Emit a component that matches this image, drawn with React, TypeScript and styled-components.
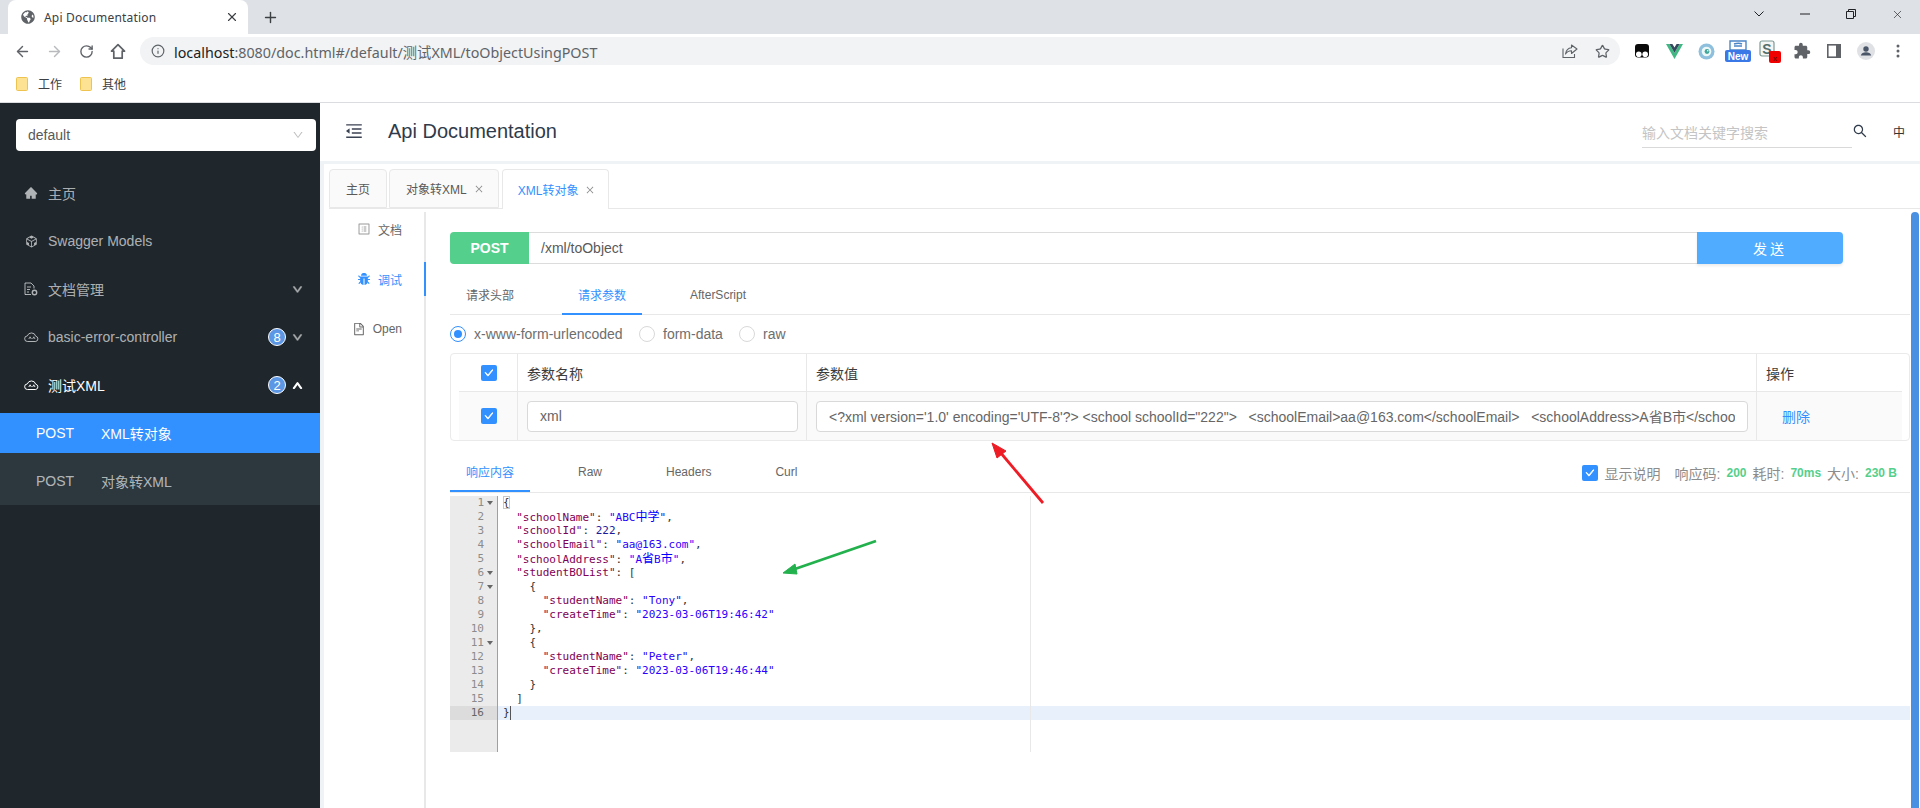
// App.tsx
import React from 'react';
import styled, { createGlobalStyle } from 'styled-components';
import { FaGlobeAmericas } from 'react-icons/fa';
import { MdExtension } from 'react-icons/md';
import {
  AiFillBug,
  AiFillHome,
  AiOutlineCheck,
  AiOutlineClose,
  AiOutlineCodeSandbox,
  AiOutlineDown,
  AiOutlineFileText,
  AiOutlineMenuFold,
  AiOutlineProfile,
  AiOutlineSearch,
  AiOutlineUp,
} from 'react-icons/ai';
import { ArrowLeft, ArrowRight, Info, Plus, RotateCw, Star, X } from 'lucide-react';

const UI_FONT = `"Liberation Sans", "Noto Sans CJK SC", sans-serif`;
const CHROME_FONT = `"Noto Sans", "Noto Sans CJK SC", sans-serif`;
const MONO_FONT = `"DejaVu Sans Mono", "Noto Sans CJK SC", monospace`;

const GlobalStyle = createGlobalStyle`
  html, body {
    margin: 0;
    height: 100%;
    overflow: hidden;
    background: #ffffff;
  }
  * {
    box-sizing: border-box;
  }
`;

const Page = styled.div`
  position: relative;
  width: 1920px;
  height: 808px;
  overflow: hidden;
  display: flex;
  flex-direction: column;
  font-family: ${UI_FONT};
`;

/* browser chrome */
const TabStrip = styled.div`
  height: 34px;
  background: #dee1e6;
  display: flex;
  align-items: flex-end;
  padding-left: 8px;
`;

const BrowserTab = styled.div`
  width: 240px;
  height: 34px;
  background: #ffffff;
  border-radius: 8px 8px 0 0;
  display: flex;
  align-items: center;
  padding: 0 9px 0 13px;
  font-family: ${CHROME_FONT};
  font-size: 12px;
  color: #3c4043;
  svg {
    flex: none;
  }
`;

const BrowserTabTitle = styled.span`
  margin-left: 9px;
  flex: 1;
  letter-spacing: 0.2px;
`;

const NewTab = styled.div`
  width: 44px;
  height: 34px;
  display: flex;
  align-items: center;
  justify-content: center;
  color: #3c4043;
`;

const WindowControls = styled.div`
  margin-left: auto;
  height: 28px;
  align-self: flex-start;
  display: flex;
  padding-right: 0;
`;

const WindowButton = styled.div`
  width: 46px;
  height: 28px;
  display: flex;
  align-items: center;
  justify-content: center;
  color: #202124;
`;

const Toolbar = styled.div`
  height: 34px;
  display: flex;
  align-items: center;
  padding: 0 6px;
  background: #ffffff;
`;

const ToolButton = styled.div<{ $dim?: boolean }>`
  width: 32px;
  height: 32px;
  flex: none;
  display: flex;
  align-items: center;
  justify-content: center;
  color: ${p => (p.$dim ? '#b8babd' : '#5f6368')};
`;

const UrlPill = styled.div`
  flex: 1;
  height: 28px;
  margin: 0 6px;
  background: #f1f3f4;
  border-radius: 14px;
  display: flex;
  align-items: center;
  padding: 0 2px 0 11px;
  color: #5f6368;
`;

const UrlText = styled.span`
  margin-left: 9px;
  flex: 1;
  font-family: ${CHROME_FONT};
  font-size: 14.3px;
  color: #5f6368;
  b {
    font-weight: 400;
    color: #202124;
  }
`;

const BookmarkBar = styled.div`
  height: 35px;
  display: flex;
  align-items: center;
  padding: 0 0 3px 16px;
  gap: 18px;
  background: #ffffff;
  border-bottom: 1px solid #dadce0;
`;

const Bookmark = styled.div`
  display: flex;
  align-items: center;
  gap: 10px;
  font-family: ${CHROME_FONT};
  font-size: 12px;
  color: #3c4043;
`;

/* app */
const AppRow = styled.div`
  flex: 1;
  display: flex;
  min-height: 0;
`;

const Sidebar = styled.aside`
  width: 320px;
  flex: none;
  background: #1f272d;
  padding-top: 16px;
`;

const ProjectSelect = styled.div`
  height: 32px;
  margin: 0 4px 0 16px;
  background: #ffffff;
  border-radius: 4px;
  display: flex;
  align-items: center;
  justify-content: space-between;
  padding: 0 12px;
  font-size: 14px;
  color: #595959;
  svg {
    color: #bfbfbf;
  }
`;

const Menu = styled.nav`
  margin-top: 18px;
`;

const MenuRow = styled.div<{ $active?: boolean }>`
  height: 48px;
  display: flex;
  align-items: center;
  padding: 0 16px 0 24px;
  font-size: 14px;
  color: ${p => (p.$active ? '#ffffff' : 'rgba(255, 255, 255, 0.65)')};
`;

const MenuIcon = styled.span`
  width: 24px;
  display: flex;
  align-items: center;
  flex: none;
`;

const MenuLabel = styled.span`
  flex: 1;
`;

const CountBadge = styled.span`
  width: 18px;
  height: 18px;
  border-radius: 50%;
  background: #5b97e5;
  border: 1px solid #ffffff;
  color: #ffffff;
  font-size: 13px;
  display: flex;
  align-items: center;
  justify-content: center;
  margin-right: 4px;
`;

const Caret = styled.span`
  width: 14px;
  display: flex;
  align-items: center;
  justify-content: center;
`;

const SubMenu = styled.div`
  margin-top: 4px;
`;

const SubRow = styled.div<{ $selected?: boolean }>`
  height: ${p => (p.$selected ? '40px' : '52px')};
  padding-top: ${p => (p.$selected ? '0' : '4px')};
  display: flex;
  align-items: center;
  padding-left: 36px;
  font-size: 14px;
  background: ${p => (p.$selected ? '#3390ff' : '#2c383e')};
  color: ${p => (p.$selected ? '#ffffff' : 'rgba(255, 255, 255, 0.65)')};
`;

const SubMethod = styled.span`
  width: 65px;
`;

const MainColumn = styled.main`
  flex: 1;
  min-width: 0;
  display: flex;
  flex-direction: column;
  background: #f0f3f6;
`;

const Header = styled.header`
  height: 58px;
  flex: none;
  background: #ffffff;
  display: flex;
  align-items: center;
  padding: 0 0 0 24px;
  color: #3b4252;
`;

const HeaderTitle = styled.h1`
  margin: 0 0 2px 24px;
  font-size: 20px;
  font-weight: 400;
  color: #2f3b4b;
`;

const SearchBox = styled.div`
  margin-left: auto;
  width: 210px;
  height: 32px;
  border-bottom: 1px solid #d9d9d9;
  font-size: 14px;
  color: #c4c4c4;
  display: flex;
  align-items: center;
`;

const SearchIcon = styled.span`
  width: 16px;
  margin-bottom: 2px;
  display: flex;
  justify-content: center;
  color: #2f3b4b;
`;

const LangSwitch = styled.span`
  width: 52px;
  padding-left: 10px;
  margin-bottom: 2px;
  font-size: 12px;
  color: #333333;
  text-align: center;
`;

const Workspace = styled.div`
  position: relative;
  flex: 1;
  min-height: 0;
  margin: 3px 0 0 4px;
  background: #ffffff;
  display: flex;
  flex-direction: column;
`;

const PageTabs = styled.div`
  height: 45px;
  flex: none;
  margin-left: 5px;
  padding-top: 5px;
  display: flex;
  border-bottom: 1px solid #e8e8e8;
`;

const PageTab = styled.div<{ $active?: boolean }>`
  height: ${p => (p.$active ? '40px' : '39px')};
  margin: 0 2px 0 ${p => (p.$active ? '1px' : '0')};
  padding: 0 ${p => (p.$active ? '13px 0 15px' : '14px 0 16px')};
  display: flex;
  align-items: center;
  gap: 7px;
  font-size: 12px;
  border: 1px solid #e8e8e8;
  border-bottom: ${p => (p.$active ? 'none' : '1px solid #e8e8e8')};
  border-radius: 4px 4px 0 0;
  background: ${p => (p.$active ? '#ffffff' : '#fafafa')};
  color: ${p => (p.$active ? '#3390ff' : '#595959')};
  svg {
    color: #8c8c8c;
  }
`;

const HomeTab = styled(PageTab)`
  padding: 0 16px;
`;

const WorkBody = styled.div`
  flex: 1;
  min-height: 0;
  display: flex;
`;

const DocNav = styled.div`
  width: 97px;
  margin: 3px 0 0 5px;
  flex: none;
  border-right: 2px solid #e8e8e8;
  display: flex;
  flex-direction: column;
  gap: 16px;
`;

const DocNavItem = styled.div<{ $active?: boolean }>`
  position: relative;
  height: 34px;
  display: flex;
  align-items: center;
  justify-content: flex-end;
  padding-right: 22px;
  gap: 7px;
  font-size: 12px;
  color: ${p => (p.$active ? '#3390ff' : '#666666')};
  ${p =>
    p.$active &&
    `&::after {
      content: '';
      position: absolute;
      top: 0;
      right: -2px;
      width: 2px;
      height: 34px;
      background: #3390ff;
    }`}
`;

const Content = styled.section`
  flex: 1;
  min-width: 0;
  padding: 23px 10px 0 24px;
`;

const RequestBar = styled.div`
  height: 32px;
  width: 1393px;
  display: flex;
  font-size: 14px;
`;

const MethodTag = styled.div`
  width: 79px;
  background: #55cf8c;
  border-radius: 4px 0 0 4px;
  color: #ffffff;
  font-weight: 700;
  font-size: 14px;
  display: flex;
  align-items: center;
  justify-content: center;
`;

const PathField = styled.div`
  flex: 1;
  border: 1px solid #dcdcdc;
  border-width: 1px 0;
  display: flex;
  align-items: center;
  padding-left: 12px;
  color: #595959;
`;

const SendButton = styled.div`
  width: 146px;
  background: #50acff;
  border-radius: 0 4px 4px 0;
  box-shadow: 0 2px 3px rgba(0, 0, 0, 0.08);
  color: #ffffff;
  font-size: 14px;
  letter-spacing: 3px;
  display: flex;
  align-items: center;
  justify-content: center;
`;

const TabsBar = styled.div<{ $top: number }>`
  margin-top: ${p => p.$top}px;
  height: 39px;
  display: flex;
  align-items: stretch;
  gap: 32px;
  border-bottom: 1px solid #e8e8e8;
  font-size: 12px;
`;

const InnerTab = styled.div<{ $active?: boolean }>`
  padding: 0 16px;
  height: 39px;
  display: flex;
  align-items: center;
  color: ${p => (p.$active ? '#3390ff' : '#666666')};
  border-bottom: 2px solid ${p => (p.$active ? '#3390ff' : 'transparent')};
`;

const RadioRow = styled.div`
  height: 38px;
  display: flex;
  align-items: center;
  font-size: 14px;
  color: #6e6e6e;
`;

const RadioOption = styled.label<{ $width: number }>`
  width: ${p => p.$width}px;
  display: flex;
  align-items: center;
  gap: 8px;
`;

const RadioDot = styled.span<{ $on?: boolean }>`
  width: 16px;
  height: 16px;
  border-radius: 50%;
  border: 1px solid ${p => (p.$on ? '#3390ff' : '#d9d9d9')};
  display: flex;
  align-items: center;
  justify-content: center;
  &::after {
    content: '';
    width: 8px;
    height: 8px;
    border-radius: 50%;
    background: ${p => (p.$on ? '#3390ff' : 'transparent')};
  }
`;

const ParamTable = styled.div`
  height: 88px;
  border: 1px solid #eaeaea;
  border-radius: 4px;
  font-size: 14px;
  color: #3c3c3c;
`;

const ParamHead = styled.div`
  height: 37px;
  display: grid;
  grid-template-columns: 67px 289px 950px 1fr;
`;

const ParamBody = styled.div`
  height: 49px;
  margin: 0 7px 0 8px;
  background: #fafafa;
  border-top: 1px solid #e8e8e8;
  display: grid;
  grid-template-columns: 59px 289px 950px 1fr;
`;

const ParamCell = styled.div<{ $line?: boolean }>`
  display: flex;
  align-items: center;
  padding: 0 8px 0 9px;
  border-right: ${p => (p.$line ? '1px solid #e8e8e8' : 'none')};
`;

const HeadCheckCell = styled(ParamCell)`
  padding: 0 0 0 30px;
`;

const BodyCheckCell = styled(ParamCell)`
  padding: 0 0 0 22px;
`;

const CheckBox = styled.span`
  width: 16px;
  height: 16px;
  flex: none;
  border-radius: 2px;
  background: #3390ff;
  color: #ffffff;
  display: flex;
  align-items: center;
  justify-content: center;
`;

const ParamInput = styled.input`
  width: 100%;
  height: 31px;
  border: 1px solid #d9d9d9;
  border-radius: 4px;
  background: #ffffff;
  padding: 0 12px;
  font-family: ${UI_FONT};
  font-size: 14px;
  color: #666666;
  outline: none;
`;

const DeleteLink = styled.span`
  margin-left: 16px;
  font-size: 14px;
  color: #3390ff;
`;

const ResponseBar = styled(TabsBar)`
  height: 40px;
`;

const ResponseInfo = styled.div`
  margin-left: auto;
  display: flex;
  align-items: center;
  font-size: 14px;
  color: #8c8c8c;
  padding-right: 13px;
`;

const InfoLabel = styled.span<{ $gap: number }>`
  margin-left: ${p => p.$gap}px;
`;

const InfoValue = styled.b`
  margin-left: 6px;
  font-size: 12px;
  color: #55cf8c;
  font-weight: 700;
`;

const Editor = styled.div`
  position: relative;
  margin-top: 3px;
  height: 256px;
  display: flex;
  font-family: ${MONO_FONT};
  font-size: 11px;
  line-height: 14px;
`;

const Gutter = styled.div`
  width: 48px;
  flex: none;
  background: #ebebeb;
  border-right: 1px solid #a0a0a0;
  color: #8c8c8c;
`;

const GutterCell = styled.div<{ $active?: boolean }>`
  height: 14px;
  display: flex;
  justify-content: flex-end;
  align-items: center;
  padding-right: 13px;
  position: relative;
  background: ${p => (p.$active ? '#dcdcdc' : 'transparent')};
  color: ${p => (p.$active ? '#666666' : '#8c8c8c')};
`;

const FoldMark = styled.span`
  position: absolute;
  right: 4px;
  top: 5px;
  border: 3px solid transparent;
  border-top: 4px solid #666666;
  border-bottom: none;
`;

const CodeArea = styled.div`
  flex: 1;
  min-width: 0;
`;

const CodeLine = styled.div<{ $active?: boolean }>`
  height: 14px;
  padding-left: 5px;
  white-space: pre;
  color: #333333;
  background: ${p => (p.$active ? '#e8f0fc' : 'transparent')};
`;

const Key = styled.span`
  color: #7f0055;
`;
const Str = styled.span`
  color: #2a00ff;
`;
const Num = styled.span`
  color: #1a1a9c;
`;
const Cjk = styled.span`
  font-size: 12px;
  color: #0000ff;
`;
const MatchedBrace = styled.span`
  outline: 1px solid #c8c8c8;
  outline-offset: -1px;
`;
const TextCaret = styled.span`
  display: inline-block;
  width: 1px;
  height: 14px;
  vertical-align: top;
  background: #555555;
`;

const PrintMargin = styled.div`
  position: absolute;
  top: 0;
  bottom: 0;
  left: 580px;
  width: 1px;
  background: #e8e8e8;
`;

const ScrollThumb = styled.div`
  position: absolute;
  top: 48px;
  right: 1px;
  bottom: 0;
  width: 8px;
  border-radius: 4px 4px 0 0;
  background: #4a90e2;
`;

const Annotations = styled.svg`
  position: absolute;
  inset: 0;
  pointer-events: none;
`;

/* hand drawn icons */
const BookmarkFolder = () => (
  <svg width="12" height="14" viewBox="0 0 12 14">
    <path d="M0.5 1.5a1 1 0 0 1 1-1h9a1 1 0 0 1 1 1v11a1 1 0 0 1-1 1h-9a1 1 0 0 1-1-1z" fill="#fde293" stroke="#eec34f" />
  </svg>
);

const HomeOutline = () => (
  <svg width="16" height="17" viewBox="0 0 16 17" fill="none" stroke="#5f6368" strokeWidth="1.7">
    <path d="M8 1.6 1.5 8.2h2.3v7h8.4v-7h2.3z" strokeLinejoin="round" />
  </svg>
);

const ShareIcon = () => (
  <svg width="16" height="14" viewBox="0 0 16 14" fill="none" stroke="#5f6368" strokeWidth="1.1">
    <path d="M1 4.5v9h11.5V10" />
    <path d="M9.5 1v2.7C5.5 4 4 6.4 3.5 10c1.4-2.4 3.2-3.3 6-3.3v2.8L15 5z" strokeLinejoin="round" />
  </svg>
);

const TadpoleExt = () => (
  <svg width="16" height="16" viewBox="0 0 16 16">
    <rect x="1" y="1" width="14" height="13.5" rx="3" fill="#0a0a0a" />
    <circle cx="4.8" cy="11.2" r="2.8" fill="#ffffff" />
    <circle cx="11.2" cy="11.2" r="2.8" fill="#ffffff" />
    <rect x="7.2" y="3" width="1.6" height="6" fill="#0a0a0a" />
  </svg>
);

const VueExt = () => (
  <svg width="17" height="15" viewBox="0 0 17 15">
    <path d="M0 0h3.4l5.1 8.8L13.6 0H17L8.5 15z" fill="#41b883" />
    <path d="M3.4 0h3l2.1 3.6L10.6 0h3L8.5 8.8z" fill="#35495e" />
  </svg>
);

const RingExt = () => (
  <svg width="17" height="17" viewBox="0 0 17 17">
    <circle cx="8.5" cy="8.5" r="8" fill="#8ebfdc" />
    <circle cx="8.5" cy="8.5" r="4.8" fill="#eef7f8" />
    <circle cx="9" cy="8.5" r="2.4" fill="#3fa79b" />
    <circle cx="9.8" cy="7.8" r="0.8" fill="#ffffff" />
  </svg>
);

const NewExt = () => (
  <svg width="26" height="22" viewBox="0 0 26 22">
    <path d="M5 1h16v9H5z" fill="#ffffff" stroke="#4b87c7" strokeWidth="1.4" />
    <path d="M9 6h8M9 4c3-1 6-1 8 0" stroke="#4b87c7" strokeWidth="1.6" fill="none" />
    <rect x="0" y="10" width="26" height="12" rx="2" fill="#3b78e7" />
    <text x="13" y="20" fontFamily="Liberation Sans" fontSize="10" fontWeight="700" fill="#ffffff" textAnchor="middle">New</text>
  </svg>
);

const RedBadgeExt = () => (
  <svg width="22" height="23" viewBox="0 0 22 23">
    <rect x="1" y="1" width="14" height="15" rx="2" fill="#f3f6f5" stroke="#7d9a93" strokeWidth="1.2" />
    <text x="8" y="14" fontFamily="Liberation Sans" fontSize="14" fontWeight="700" fill="#546e6a" textAnchor="middle">S</text>
    <rect x="10" y="11" width="12" height="12" rx="2" fill="#f00000" />
    <text x="16" y="21" fontFamily="Liberation Sans" fontSize="8" fill="#4a0000" textAnchor="middle">x</text>
  </svg>
);

const PanelIcon = () => (
  <svg width="14" height="14" viewBox="0 0 14 14">
    <path d="M0 0h14v14H0z" fill="#5f6368" />
    <path d="M1.6 1.6h7.4v10.8H1.6z" fill="#ffffff" />
  </svg>
);

const Avatar = () => (
  <svg width="18" height="18" viewBox="0 0 18 18">
    <circle cx="9" cy="9" r="9" fill="#dfe1e5" />
    <circle cx="9" cy="7" r="2.7" fill="#4a5568" />
    <path d="M3.8 13.4c.5-2.2 2.7-3.2 5.2-3.2s4.7 1 5.2 3.2z" fill="#4a5568" />
  </svg>
);

const Kebab = () => (
  <svg width="4" height="14" viewBox="0 0 4 14" fill="#5f6368">
    <circle cx="2" cy="2" r="1.5" />
    <circle cx="2" cy="7" r="1.5" />
    <circle cx="2" cy="12" r="1.5" />
  </svg>
);

const Minimize = () => (
  <svg width="10" height="10" viewBox="0 0 10 10">
    <path d="M0 5h10" stroke="#202124" />
  </svg>
);

const Restore = () => (
  <svg width="10" height="10" viewBox="0 0 10 10" fill="none" stroke="#202124">
    <path d="M.5 2.5h7v7h-7zM2.5 2.5v-2h7v7h-2" />
  </svg>
);

const DocGear = () => (
  <svg width="14" height="14" viewBox="0 0 14 14" fill="none" stroke="currentColor" strokeWidth="1">
    <path d="M7 12.5H1V1h6l3 3v2.5" />
    <path d="M3 5h4M3 7.5h3M3 10h2" />
    <circle cx="10.5" cy="10.5" r="2.2" strokeWidth="1.4" />
  </svg>
);

const CloudApi = () => (
  <svg width="15" height="12" viewBox="0 0 15 12" fill="none" stroke="currentColor" strokeWidth="1">
    <path d="M3.6 10.5a2.8 2.8 0 0 1-.3-5.6 4.4 4.4 0 0 1 8.4.3 2.7 2.7 0 0 1 0 5.3z" />
    <path d="M4.8 8l1.3-2.2L7.4 8M8.6 8l1.2-2.2L11 8" strokeWidth="0.9" />
  </svg>
);

const CHEVRON_DIM = 'rgba(255, 255, 255, 0.4)';

const menuItems = [
  { icon: <AiFillHome size={14} />, label: '主页' },
  { icon: <AiOutlineCodeSandbox size={15} />, label: 'Swagger Models' },
  { icon: <DocGear />, label: '文档管理', caret: 'down' },
  { icon: <CloudApi />, label: 'basic-error-controller', count: 8, caret: 'down' },
  { icon: <CloudApi />, label: '测试XML', count: 2, caret: 'up', active: true },
];

const extensionIcons = [
  <TadpoleExt key="a" />,
  <VueExt key="b" />,
  <RingExt key="c" />,
  <NewExt key="d" />,
  <RedBadgeExt key="e" />,
  <MdExtension key="f" size={18} />,
  <PanelIcon key="g" />,
  <Avatar key="h" />,
  <Kebab key="i" />,
];

const Q = ({ children }: { children: React.ReactNode }) => <Key>{children}</Key>;

const codeLines: React.ReactNode[] = [
  <MatchedBrace>{'{'}</MatchedBrace>,
  <>  <Q>"schoolName"</Q>: <Str>"ABC<Cjk>中学</Cjk>"</Str>,</>,
  <>  <Q>"schoolId"</Q>: <Num>222</Num>,</>,
  <>  <Q>"schoolEmail"</Q>: <Str>"aa@163.com"</Str>,</>,
  <>  <Q>"schoolAddress"</Q>: <Str>"A<Cjk>省</Cjk>B<Cjk>市</Cjk>"</Str>,</>,
  <>  <Q>"studentBOList"</Q>: [</>,
  '    {',
  <>      <Q>"studentName"</Q>: <Str>"Tony"</Str>,</>,
  <>      <Q>"createTime"</Q>: <Str>"2023-03-06T19:46:42"</Str></>,
  '    },',
  '    {',
  <>      <Q>"studentName"</Q>: <Str>"Peter"</Str>,</>,
  <>      <Q>"createTime"</Q>: <Str>"2023-03-06T19:46:44"</Str></>,
  '    }',
  '  ]',
  <>{'}'}<TextCaret /></>,
];

const foldLines = [1, 6, 7, 11];

const xmlValue =
  `<?xml version='1.0' encoding='UTF-8'?> <school schoolId="222">   <schoolEmail>aa@163.com</schoolEmail>   <schoolAddress>A省B市</school`;

const App: React.FC = () => {
  return (
    <Page>
      <GlobalStyle />
      <TabStrip>
        <BrowserTab>
          <FaGlobeAmericas size={14} color="#5f6368" />
          <BrowserTabTitle>Api Documentation</BrowserTabTitle>
          <X size={14} color="#3c4043" />
        </BrowserTab>
        <NewTab>
          <Plus size={17} />
        </NewTab>
        <WindowControls>
          <WindowButton>
            <svg width="10" height="6" viewBox="0 0 10 6" fill="none" stroke="#202124">
              <path d="M.5.5 5 5 9.5.5" />
            </svg>
          </WindowButton>
          <WindowButton><Minimize /></WindowButton>
          <WindowButton><Restore /></WindowButton>
          <WindowButton><X size={13} strokeWidth={1.2} /></WindowButton>
        </WindowControls>
      </TabStrip>

      <Toolbar>
        <ToolButton><ArrowLeft size={17} /></ToolButton>
        <ToolButton $dim><ArrowRight size={17} /></ToolButton>
        <ToolButton><RotateCw size={15} strokeWidth={2.2} /></ToolButton>
        <ToolButton><HomeOutline /></ToolButton>
        <UrlPill>
          <Info size={14} />
          <UrlText><b>localhost</b>:8080/doc.html#/default/测试XML/toObjectUsingPOST</UrlText>
          <ToolButton><ShareIcon /></ToolButton>
          <ToolButton><Star size={15} strokeWidth={2} /></ToolButton>
        </UrlPill>
        {extensionIcons.map(icon => (
          <ToolButton key={icon.key}>{icon}</ToolButton>
        ))}
      </Toolbar>

      <BookmarkBar>
        <Bookmark><BookmarkFolder />工作</Bookmark>
        <Bookmark><BookmarkFolder />其他</Bookmark>
      </BookmarkBar>

      <AppRow>
        <Sidebar>
          <ProjectSelect>
            default
            <AiOutlineDown size={12} />
          </ProjectSelect>
          <Menu>
            {menuItems.map(item => (
              <MenuRow key={item.label} $active={item.active}>
                <MenuIcon>{item.icon}</MenuIcon>
                <MenuLabel>{item.label}</MenuLabel>
                {item.count && <CountBadge>{item.count}</CountBadge>}
                {item.caret && (
                  <Caret>
                    {item.caret === 'down'
                      ? <AiOutlineDown size={11} color={CHEVRON_DIM} strokeWidth={120} />
                      : <AiOutlineUp size={11} color="#ffffff" strokeWidth={120} />}
                  </Caret>
                )}
              </MenuRow>
            ))}
          </Menu>
          <SubMenu>
            <SubRow $selected><SubMethod>POST</SubMethod>XML转对象</SubRow>
            <SubRow><SubMethod>POST</SubMethod>对象转XML</SubRow>
          </SubMenu>
        </Sidebar>

        <MainColumn>
          <Header>
            <AiOutlineMenuFold size={20} style={{ marginBottom: 2 }} />
            <HeaderTitle>Api Documentation</HeaderTitle>
            <SearchBox>输入文档关键字搜索</SearchBox>
            <SearchIcon><AiOutlineSearch size={18} /></SearchIcon>
            <LangSwitch>中</LangSwitch>
          </Header>

          <Workspace>
            <PageTabs>
              <HomeTab>主页</HomeTab>
              <PageTab>对象转XML<AiOutlineClose size={10} /></PageTab>
              <PageTab $active>XML转对象<AiOutlineClose size={10} /></PageTab>
            </PageTabs>
            <WorkBody>
              <DocNav>
                <DocNavItem><AiOutlineProfile size={14} color="#9a9a9a" />文档</DocNavItem>
                <DocNavItem $active><AiFillBug size={14} />调试</DocNavItem>
                <DocNavItem><AiOutlineFileText size={14} />Open</DocNavItem>
              </DocNav>
              <Content>
                <RequestBar>
                  <MethodTag>POST</MethodTag>
                  <PathField>/xml/toObject</PathField>
                  <SendButton>发送</SendButton>
                </RequestBar>
                <TabsBar $top={12}>
                  <InnerTab>请求头部</InnerTab>
                  <InnerTab $active>请求参数</InnerTab>
                  <InnerTab>AfterScript</InnerTab>
                </TabsBar>
                <RadioRow>
                  <RadioOption $width={189}><RadioDot $on />x-www-form-urlencoded</RadioOption>
                  <RadioOption $width={100}><RadioDot />form-data</RadioOption>
                  <RadioOption $width={60}><RadioDot />raw</RadioOption>
                </RadioRow>
                <ParamTable>
                  <ParamHead>
                    <HeadCheckCell $line>
                      <CheckBox><AiOutlineCheck size={10} strokeWidth={80} /></CheckBox>
                    </HeadCheckCell>
                    <ParamCell $line>参数名称</ParamCell>
                    <ParamCell $line>参数值</ParamCell>
                    <ParamCell>操作</ParamCell>
                  </ParamHead>
                  <ParamBody>
                    <BodyCheckCell $line>
                      <CheckBox><AiOutlineCheck size={10} strokeWidth={80} /></CheckBox>
                    </BodyCheckCell>
                    <ParamCell $line><ParamInput readOnly value="xml" /></ParamCell>
                    <ParamCell $line><ParamInput readOnly value={xmlValue} /></ParamCell>
                    <ParamCell><DeleteLink>删除</DeleteLink></ParamCell>
                  </ParamBody>
                </ParamTable>
                <ResponseBar $top={12}>
                  <InnerTab $active>响应内容</InnerTab>
                  <InnerTab>Raw</InnerTab>
                  <InnerTab>Headers</InnerTab>
                  <InnerTab>Curl</InnerTab>
                  <ResponseInfo>
                    <CheckBox><AiOutlineCheck size={10} strokeWidth={80} /></CheckBox>
                    <InfoLabel $gap={7}>显示说明</InfoLabel>
                    <InfoLabel $gap={14}>响应码:</InfoLabel><InfoValue>200</InfoValue>
                    <InfoLabel $gap={6}>耗时:</InfoLabel><InfoValue>70ms</InfoValue>
                    <InfoLabel $gap={6}>大小:</InfoLabel><InfoValue>230 B</InfoValue>
                  </ResponseInfo>
                </ResponseBar>
                <Editor>
                  <Gutter>
                    {codeLines.map((_, i) => (
                      <GutterCell key={i} $active={i === 15}>
                        {i + 1}
                        {foldLines.includes(i + 1) && <FoldMark />}
                      </GutterCell>
                    ))}
                  </Gutter>
                  <CodeArea>
                    {codeLines.map((line, i) => (
                      <CodeLine key={i} $active={i === 15}>{line}</CodeLine>
                    ))}
                  </CodeArea>
                  <PrintMargin />
                </Editor>
              </Content>
            </WorkBody>
            <ScrollThumb />
          </Workspace>
        </MainColumn>
      </AppRow>

      {/* arrows drawn over the screenshot */}
      <Annotations width="1920" height="808" viewBox="0 0 1920 808">
        <path d="M1043 503 1000 452" stroke="#ee1c25" strokeWidth="2.8" fill="none" />
        <path d="M992 443 1006 451 997 458z" fill="#ee1c25" stroke="#ee1c25" />
        <path d="M876 541 792 570" stroke="#22b14c" strokeWidth="2.8" fill="none" />
        <path d="M783 573 795 564 797 574z" fill="#22b14c" stroke="#22b14c" />
      </Annotations>
    </Page>
  );
};

export default App;
